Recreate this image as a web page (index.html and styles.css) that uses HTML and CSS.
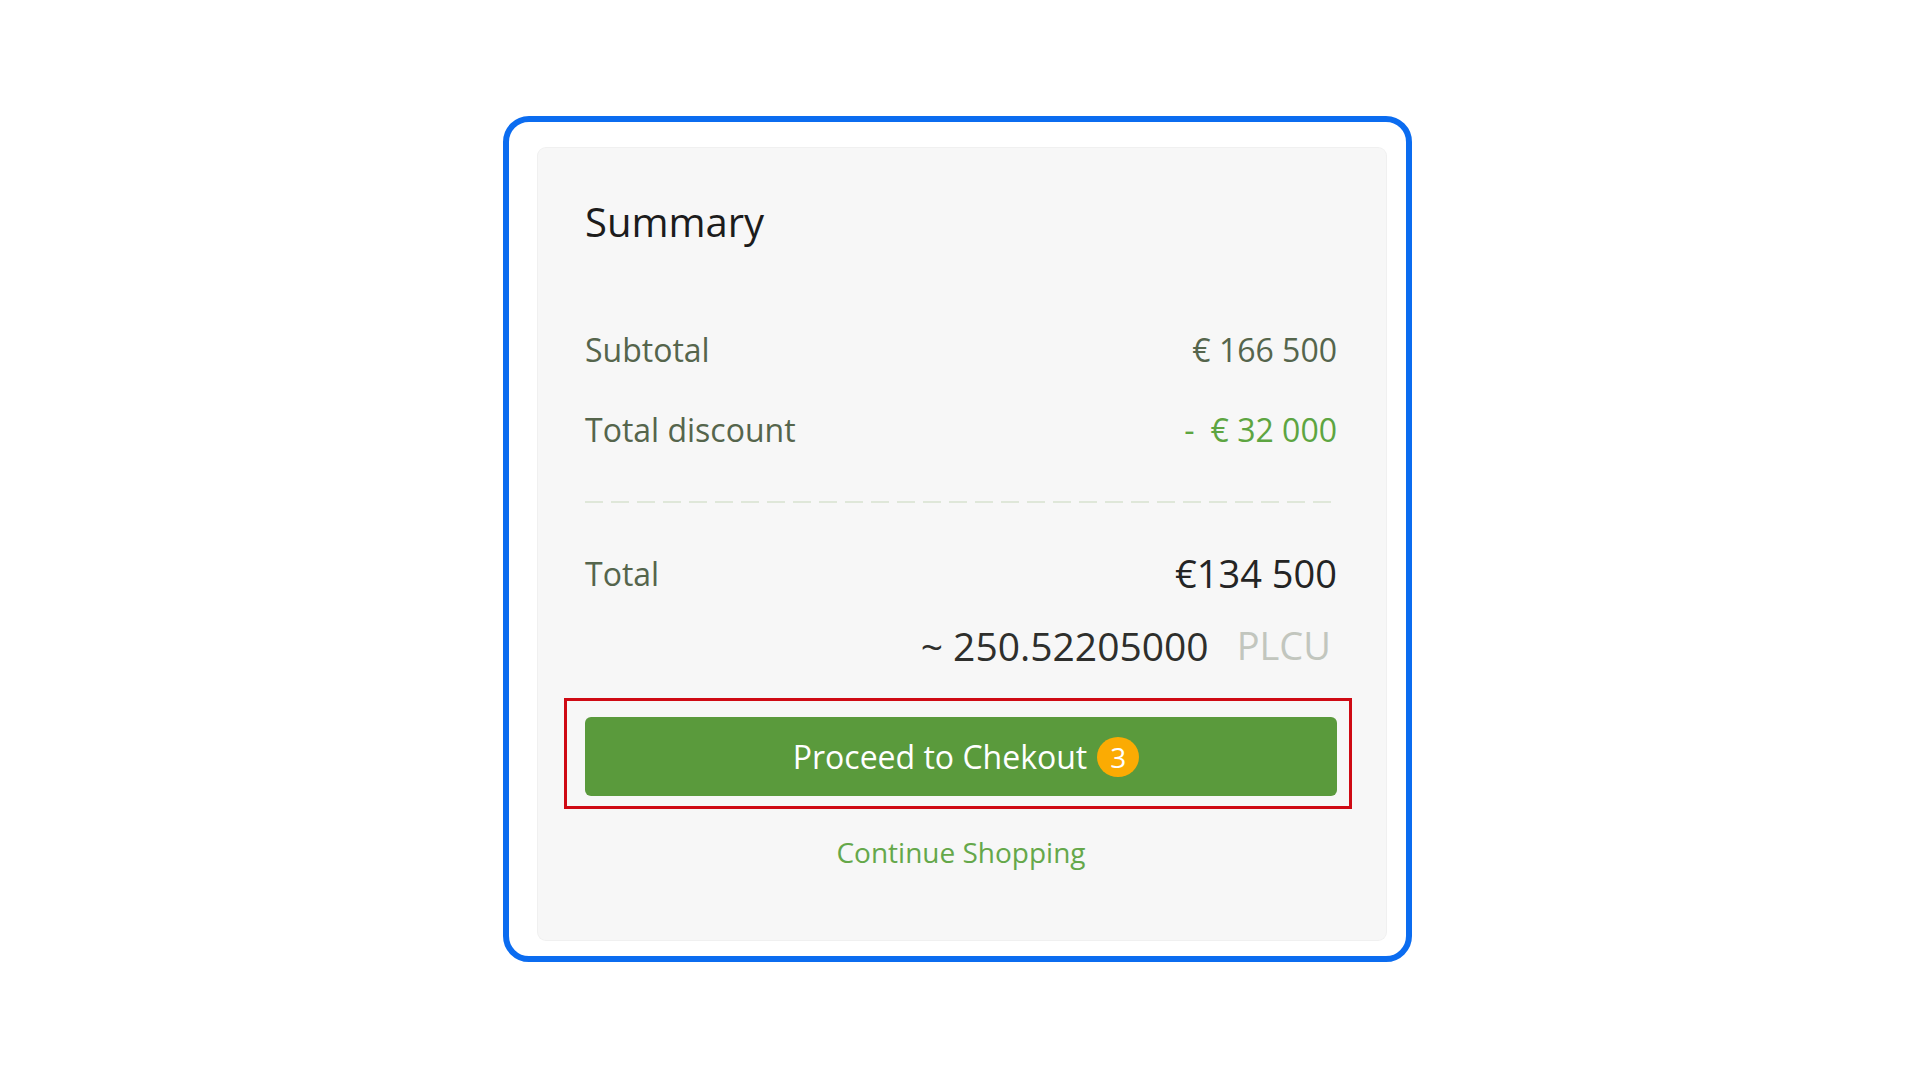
FILE: index.html
```html
<!DOCTYPE html>
<html lang="en">
<head>
<meta charset="utf-8">
<title>Summary</title>
<link rel="stylesheet" href="styles.css">
</head>
<body>
<div class="page">
  <div class="frame">
    <div class="card">
      <h2 class="title">Summary</h2>
      <div class="row row-first">
        <span class="label">Subtotal</span>
        <span class="value">€ 166 500</span>
      </div>
      <div class="row row-second">
        <span class="label">Total discount</span>
        <span class="value discount"><span class="minus">-</span>€ 32 000</span>
      </div>
      <div class="divider"></div>
      <div class="row total-row">
        <span class="label">Total</span>
        <span class="total-value">€134 500</span>
      </div>
      <div class="crypto-row">
        <span class="crypto-amount">~ 250.52205000</span>
        <span class="crypto-unit">PLCU</span>
      </div>
      <div class="highlight">
        <button class="checkout">
          <span>Proceed to Chekout</span>
          <span class="badge">3</span>
        </button>
      </div>
      <a class="continue" href="#">Continue Shopping</a>
    </div>
  </div>
</div>
</body>
</html>
```

FILE: styles.css
```css
* { box-sizing: border-box; }
html, body { margin: 0; padding: 0; background: #ffffff; }
body { font-family: "Open Sans", "Noto Sans", sans-serif; }

.page {
  padding: 116px 0 0 503px;
}

.frame {
  width: 909px;
  height: 846px;
  border: 6px solid #0b6cf0;
  border-radius: 26px;
  padding: 26px 20px 16px 29px;
  background: #ffffff;
}

.card {
  width: 848px;
  height: 792px;
  background: #f7f7f7;
  border-radius: 8px;
  box-shadow: 0 0 0 1px #f0f0f0;
  padding: 47px 49px 0 47px;
  display: flex;
  flex-direction: column;
}

.title {
  margin: 0;
  font-size: 40px;
  line-height: 54px;
  font-weight: 400;
  color: #1c1c1c;
}

.row {
  display: flex;
  justify-content: space-between;
  align-items: center;
  height: 44px;
}
.row-first { margin-top: 78px; }
.row-second { margin-top: 36px; }

.label {
  font-size: 32px;
  color: #55654c;
}
.value {
  font-size: 32px;
  color: #55654c;
}
.discount { color: #5da541; }
.minus { margin-right: 16px; }

.divider {
  margin-top: 50px;
  height: 2px;
  background-image: linear-gradient(to right, #dfe7d9 0 18px, transparent 18px 26px);
  background-size: 26px 2px;
  background-repeat: repeat-x;
  width: 752px;
}

.total-row {
  margin-top: 44px;
  height: 52px;
}
.total-value {
  font-size: 38px;
  color: #242424;
}

.crypto-row {
  margin-top: 20px;
  height: 52px;
  display: flex;
  justify-content: flex-end;
  align-items: center;
  font-size: 39px;
  padding-right: 6px;
}
.crypto-amount { color: #2e2f2c; }
.crypto-unit { color: #c2c6be; margin-left: 28px; font-size: 38px; }

.highlight {
  margin: 27px -15px 0 -21px;
  border: 3px solid #cf0a14;
  padding: 16px 12px 10px 18px;
}

.checkout {
  width: 100%;
  height: 79px;
  border: none;
  border-radius: 6px;
  background: #5a9a3c;
  color: #ffffff;
  font-family: "Open Sans", "Noto Sans", sans-serif;
  font-size: 32px;
  display: flex;
  align-items: center;
  justify-content: center;
  gap: 10px;
  padding: 0 0 0 10px;
}

.badge {
  width: 42px;
  height: 40px;
  border-radius: 50%;
  background: #fbab03;
  color: #ffffff;
  font-size: 28px;
  font-weight: 500;
  line-height: 40px;
  text-align: center;
}

.continue {
  margin-top: 23px;
  align-self: center;
  font-size: 28px;
  line-height: 40px;
  color: #65a84a;
  text-decoration: none;
}
```
